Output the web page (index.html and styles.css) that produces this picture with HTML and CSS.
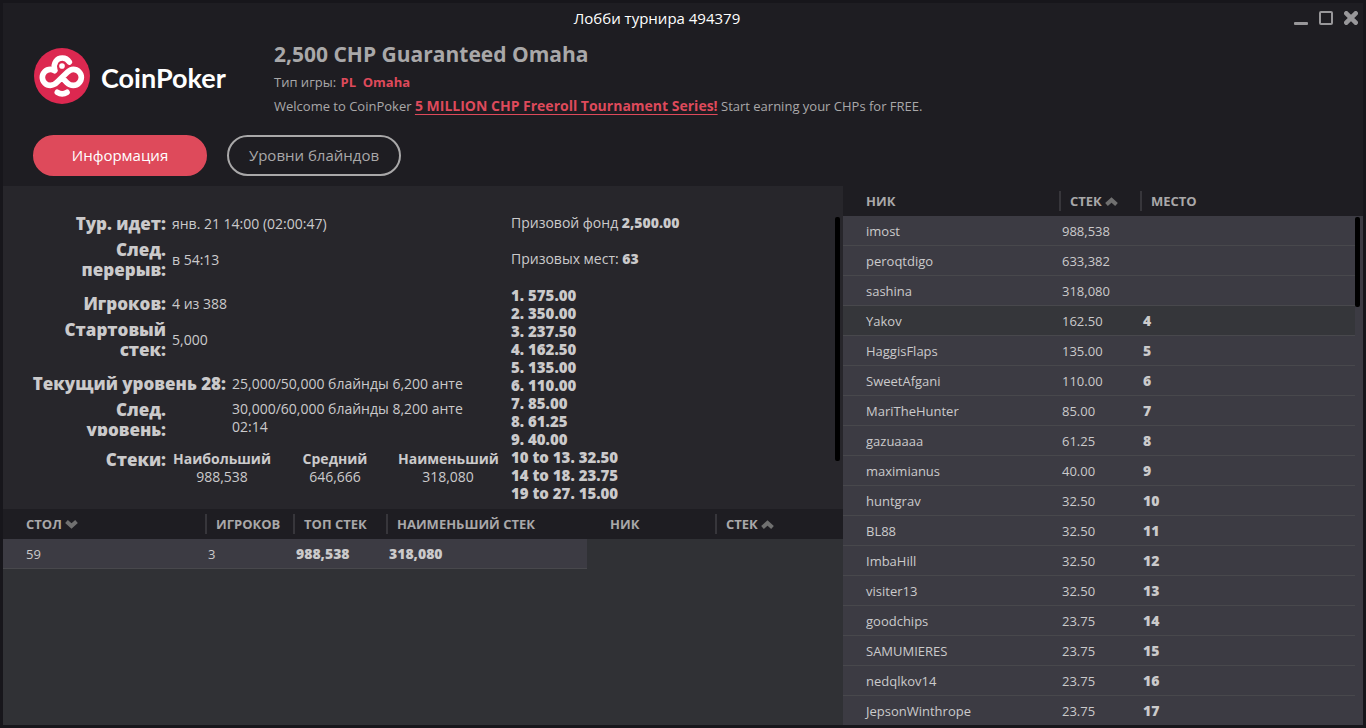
FILE: index.html
```html
<!DOCTYPE html>
<html lang="ru">
<head>
    <meta charset="UTF-8">
    <meta name="viewport" content="width=device-width, initial-scale=1.0">
    <title>Лобби турнира 494379</title>
    <link rel="stylesheet" href="styles.css">
</head>
<body>
    <div class="window">
        <div class="titlebar">
            <h1>Лобби турнира 494379</h1>
            <div class="window-buttons">
                <button type="button" aria-label="Свернуть">
                    <svg width="14" height="14" viewBox="0 0 14 14"><rect x="0" y="11" width="14" height="3" rx="1" fill="#98979a"/></svg>
                </button>
                <button type="button" aria-label="Развернуть">
                    <svg width="14" height="14" viewBox="0 0 14 14"><rect x="1" y="1" width="12" height="12" rx="1" fill="none" stroke="#98979a" stroke-width="2"/></svg>
                </button>
                <button type="button" aria-label="Закрыть">
                    <svg width="14" height="14" viewBox="0 0 14 14"><path d="M2.3 2.3L11.7 11.7M11.7 2.3L2.3 11.7" stroke="#98979a" stroke-width="4.6" stroke-linecap="round"/></svg>
                </button>
            </div>
        </div>

        <header class="header">
            <div class="logo">
                <svg width="56" height="56" viewBox="0 0 168 168">
                    <circle cx="84" cy="84" r="84" fill="#dc2850"/>
                    <g fill="none" stroke="#fff" stroke-width="17" stroke-linecap="round">
                        <path d="M62 68C58 65 54 64 49 64A24 24 0 0 0 49 112C58 112 63 109 69 103L100 73C106 67 111 64 118 64A24 24 0 0 1 118 112C110 112 104 109 99 104L88 93"/>
                        <path d="M62 66C57 44 69 30 85 30C94 30 101 34 106 42"/>
                        <path d="M70 133C79 139 90 139 99 133"/>
                    </g>
                    <circle cx="84" cy="54" r="8.5" fill="#fff"/>
                </svg>
                <span class="logo-name">CoinPoker</span>
            </div>
            <div class="tournament">
                <h2>2,500 CHP Guaranteed Omaha</h2>
                <p>Тип игры: <strong class="game-type">PL&nbsp; Omaha</strong></p>
                <p>Welcome to CoinPoker <a href="#series">5 MILLION CHP Freeroll Tournament Series!</a> Start earning your CHPs for FREE.</p>
            </div>
        </header>

        <nav class="tabs">
            <button type="button" class="tab active">Информация</button>
            <button type="button" class="tab">Уровни блайндов</button>
        </nav>

        <main class="main">
            <div class="left">
                <section class="info">
                    <dl class="details">
                        <div class="row"><dt>Тур. идет:</dt><dd>янв. 21 14:00 (02:00:47)</dd></div>
                        <div class="row tall"><dt>След. перерыв:</dt><dd>в 54:13</dd></div>
                        <div class="row"><dt>Игроков:</dt><dd>4 из 388</dd></div>
                        <div class="row tall"><dt>Стартовый стек:</dt><dd>5,000</dd></div>
                        <div class="row level"><dt>Текущий уровень 28:</dt><dd>25,000/50,000 блайнды 6,200 анте</dd></div>
                        <div class="row tall next-level"><dt>След.<br>уровень:</dt><dd>30,000/60,000 блайнды 8,200 анте<br>02:14</dd></div>
                        <div class="row stacks">
                            <dt>Стеки:</dt>
                            <dd><strong>Наибольший</strong>988,538</dd>
                            <dd><strong>Средний</strong>646,666</dd>
                            <dd><strong>Наименьший</strong>318,080</dd>
                        </div>
                    </dl>
                    <div class="prizes">
                        <p>Призовой фонд <strong>2,500.00</strong></p>
                        <p>Призовых мест: <strong>63</strong></p>
                        <ul>
                            <li>1. 575.00</li>
                            <li>2. 350.00</li>
                            <li>3. 237.50</li>
                            <li>4. 162.50</li>
                            <li>5. 135.00</li>
                            <li>6. 110.00</li>
                            <li>7. 85.00</li>
                            <li>8. 61.25</li>
                            <li>9. 40.00</li>
                            <li>10 to 13. 32.50</li>
                            <li>14 to 18. 23.75</li>
                            <li>19 to 27. 15.00</li>
                        </ul>
                    </div>
                    <div class="scroll-thumb info-thumb"></div>
                </section>

                <section class="seating">
                    <table class="grid tables">
                        <colgroup><col class="col-table"><col class="col-count"><col class="col-top"><col></colgroup>
                        <thead>
                            <tr>
                                <th><span>СТОЛ <svg width="13" height="9" viewBox="0 0 13 9"><path d="M1.5 1.5L6.5 6L11.5 1.5" class="chevron"/></svg></span></th>
                                <th><span>ИГРОКОВ</span></th>
                                <th><span>ТОП СТЕК</span></th>
                                <th><span>НАИМЕНЬШИЙ СТЕК</span></th>
                            </tr>
                        </thead>
                        <tbody>
                            <tr><td>59</td><td>3</td><td><strong>988,538</strong></td><td><strong>318,080</strong></td></tr>
                        </tbody>
                    </table>
                    <table class="grid seats">
                        <thead>
                            <tr>
                                <th><span>НИК</span></th>
                                <th><span>СТЕК <svg width="13" height="9" viewBox="0 0 13 9"><path d="M1.5 7.5L6.5 3L11.5 7.5" class="chevron"/></svg></span></th>
                            </tr>
                        </thead>
                    </table>
                </section>
            </div>

            <section class="players">
                <table class="grid">
                    <colgroup><col class="col-nick"><col class="col-stack"><col></colgroup>
                    <thead>
                        <tr>
                            <th><span>НИК</span></th>
                            <th><span>СТЕК <svg width="13" height="9" viewBox="0 0 13 9"><path d="M1.5 7.5L6.5 3L11.5 7.5" class="chevron"/></svg></span></th>
                            <th><span>МЕСТО</span></th>
                        </tr>
                    </thead>
                    <tbody>
                        <tr><td>imost</td><td>988,538</td><td></td></tr>
                        <tr><td>peroqtdigo</td><td>633,382</td><td></td></tr>
                        <tr><td>sashina</td><td>318,080</td><td></td></tr>
                        <tr class="selected"><td>Yakov</td><td>162.50</td><td><strong>4</strong></td></tr>
                        <tr><td>HaggisFlaps</td><td>135.00</td><td><strong>5</strong></td></tr>
                        <tr><td>SweetAfgani</td><td>110.00</td><td><strong>6</strong></td></tr>
                        <tr><td>MariTheHunter</td><td>85.00</td><td><strong>7</strong></td></tr>
                        <tr><td>gazuaaaa</td><td>61.25</td><td><strong>8</strong></td></tr>
                        <tr><td>maximianus</td><td>40.00</td><td><strong>9</strong></td></tr>
                        <tr><td>huntgrav</td><td>32.50</td><td><strong>10</strong></td></tr>
                        <tr><td>BL88</td><td>32.50</td><td><strong>11</strong></td></tr>
                        <tr><td>ImbaHill</td><td>32.50</td><td><strong>12</strong></td></tr>
                        <tr><td>visiter13</td><td>32.50</td><td><strong>13</strong></td></tr>
                        <tr><td>goodchips</td><td>23.75</td><td><strong>14</strong></td></tr>
                        <tr><td>SAMUMIERES</td><td>23.75</td><td><strong>15</strong></td></tr>
                        <tr><td>nedqlkov14</td><td>23.75</td><td><strong>16</strong></td></tr>
                        <tr><td>JepsonWinthrope</td><td>23.75</td><td><strong>17</strong></td></tr>
                    </tbody>
                </table>
                <div class="scroll-thumb players-thumb"></div>
            </section>
        </main>
    </div>
</body>
</html>
```
FILE: styles.css
```css
* {
    box-sizing: border-box;
}

body {
    margin: 0;
    font-family: "Open Sans", "Noto Sans", sans-serif;
    font-size: 14px;
    color: #cbcacb;
    background-color: #17161b;
}

h1, h2, p, ul, dl, dd {
    margin: 0;
    padding: 0;
}

button {
    font-family: inherit;
    cursor: pointer;
}

strong {
    font-weight: 800;
}

.window {
    display: flex;
    flex-direction: column;
    height: 100vh;
    border: 3px solid #17161b;
    background-color: #1e1d22;
    overflow: hidden;
}

/* Title bar */
.titlebar {
    display: flex;
    align-items: center;
    height: 30px;
    padding: 0 5px 0 17px;
}

.titlebar h1 {
    flex: 1;
    text-align: center;
    font-size: 15px;
    font-weight: normal;
    color: #fff;
}

.window-buttons {
    display: flex;
    gap: 11px;
}

.window-buttons button {
    padding: 0;
    border: none;
    background: none;
}

.window-buttons svg {
    display: block;
}

/* Header */
.header {
    display: flex;
    height: 102px;
    padding: 7px 31px 0;
}

.logo {
    display: flex;
    gap: 11px;
    width: 240px;
    padding-top: 8px;
}

.logo-name {
    padding-top: 12px;
    font-family: Lato, sans-serif;
    font-size: 27px;
    font-weight: bold;
    line-height: 36px;
    color: #fff;
}

.tournament {
    flex: 1;
    font-size: 13px;
    line-height: 24px;
    color: #a9a8a9;
}

.tournament h2 {
    padding-bottom: 2px;
    font-size: 21px;
    line-height: 28px;
    font-weight: bold;
}

.game-type {
    padding-left: 1px;
    font-weight: bold;
    color: #de4a5b;
}

.tournament a {
    color: #de4a5b;
    font-size: 14px;
    font-weight: bold;
    text-decoration-thickness: 1px;
    text-underline-offset: 3px;
}

.tabs {
    display: flex;
    gap: 20px;
    height: 51px;
    padding: 0 30px;
}

.tab {
    width: 174px;
    height: 41px;
    padding: 0 0 2px;
    border: 2px solid #a9a8a9;
    border-radius: 21px;
    background: none;
    font-size: 15px;
    color: #a9a8a9;
}

.tab.active {
    border-color: #de4a5b;
    background-color: #de4a5b;
    color: #fff;
}

.main {
    flex: 1;
    display: grid;
    grid-template-columns: 840fr 520fr;
    min-height: 0;
}

.left {
    display: flex;
    flex-direction: column;
    background-color: #303135;
}

/* Tournament information */
.info {
    position: relative;
    display: grid;
    grid-template-columns: 479px 1fr;
    padding: 28px 0 7px 29px;
    background-color: #27262b;
}

.row {
    display: flex;
    align-items: center;
    gap: 6px;
    margin-top: 14px;
}

.row:first-child {
    margin-top: 0;
}

.row.tall {
    margin-top: 6px;
}

.row dt {
    width: 134px;
    font-size: 17px;
    font-weight: 800;
    line-height: 20px;
    text-align: right;
}

.row dd {
    line-height: 18px;
}

.row.level dt {
    width: 194px;
    white-space: nowrap;
}

.next-level {
    height: 36px;
    overflow: hidden;
    align-items: flex-start;
}

.next-level dt {
    margin-right: 60px;
}

.stacks {
    align-items: flex-start;
}

.stacks dd {
    width: 100px;
    margin-right: 7px;
    text-align: center;
}

.stacks strong {
    display: block;
    font-weight: bold;
}

.prizes {
    line-height: 18px;
}

.prizes p {
    margin-bottom: 18px;
}

.prizes ul {
    list-style: none;
    font-size: 15px;
    font-weight: 800;
}

.scroll-thumb {
    position: absolute;
    right: 3px;
    width: 5px;
    border-radius: 2px;
    background-color: #000;
}

.info-thumb {
    top: 31px;
    height: 244px;
}

/* Tables */
.grid {
    width: 100%;
    border-collapse: separate;
    border-spacing: 0;
    table-layout: fixed;
}

.grid th {
    height: 30px;
    padding: 0;
    background-color: #1e1d22;
    font-size: 13px;
    font-weight: bold;
    text-align: left;
    color: #a9a8a9;
}

.grid th span {
    display: block;
    padding-left: 9px;
    border-left: 2px solid #37363b;
    line-height: 20px;
    white-space: nowrap;
}

.grid th:first-child span {
    padding-left: 23px;
    border-left: none;
}

.grid td {
    height: 30px;
    padding: 0 0 0 3px;
    border-bottom: 1px solid #48484c;
    background-color: #3c3b43;
    font-size: 13px;
}

.grid td:first-child {
    padding-left: 23px;
}

.grid td strong {
    font-size: 14px;
}

.grid .selected td {
    background-color: #35363a;
}

.chevron {
    fill: none;
    stroke: #707070;
    stroke-width: 4;
}

.seating {
    flex: 1;
    display: grid;
    grid-template-columns: 584fr 256fr;
    align-items: start;
}

.col-table {
    width: 202px;
}

.col-count {
    width: 88px;
}

.col-top {
    width: 93px;
}

.players {
    position: relative;
    min-height: 0;
    overflow: hidden;
    padding-right: 8px;
    background: linear-gradient(#1e1d22 30px, #3c3b43 30px);
}

.col-nick {
    width: 216px;
}

.col-stack {
    width: 81px;
}

.players-thumb {
    top: 31px;
    height: 90px;
}
```
